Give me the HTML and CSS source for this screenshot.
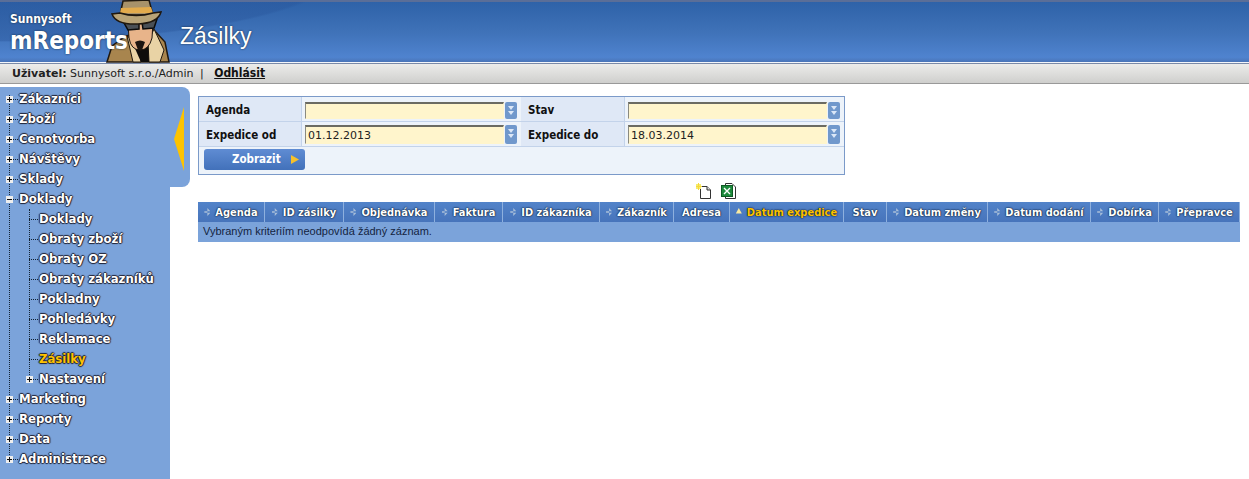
FILE: index.html
```html
<!DOCTYPE html>
<html>
	<head>
		<meta charset="UTF-8">
		<title>Zásilky</title>
		<link rel="stylesheet" href="styles.css">
	</head>
	<body>
		<div id="header">
			<div id="brand">
				<span class="company">Sunnysoft</span>
				<span class="product">mReports</span>
			</div>
			<svg class="spy" width="64" height="62" viewBox="0 0 64 62">
				<path d="M-1 62 L4 46 L18 36 L46 30 L57 42 L61 62 Z" fill="#a8854e" stroke="#20180f" stroke-width="1.5"/>
				<path d="M19 36 L25 62 L33 62 L30 44 Z" fill="#e9d3a5" stroke="#20180f"/>
				<path d="M46 29 L56 50 L52 62 L41 62 L40 42 Z" fill="#e9d3a5" stroke="#20180f"/>
				<path d="M25 44 L40 42 L41 62 L33 62 Z" fill="#0e0c0a"/>
				<path d="M20 24 L45 22 L44 38 Q41 50 32 50 Q23 50 21 38 Z" fill="#e8b48a" stroke="#20180f"/>
				<path d="M27 42 Q32 39 37 42 L34 50 L30 50 Z" fill="#1c1410"/>
				<path d="M15 21 L31 22 L31 29 L20 30 Z M34 22 L49 19 L46 28 L35 29 Z" fill="#4a5056" stroke="#0c0c0c" stroke-width="1.5"/>
				<path d="M15 1 L41 0 L45 15 L12 15 Z" fill="#a8926a" stroke="#20180f" stroke-width="1.5"/>
				<path d="M13 8 L43 7 L45 13 L12 13 Z" fill="#e3ab4c"/>
				<path d="M12 13 Q28 18 45 13 L53 12 Q50 23 30 24 Q8 25 4 14 Z" fill="#b9a477" stroke="#20180f" stroke-width="1.5"/>
			</svg>
			<h1>Zásilky</h1>
		</div>
		<div id="userbar">
			<b>Uživatel:</b> Sunnysoft s.r.o./Admin
			<span class="sep">|</span>
			<a href="#">Odhlásit</a>
		</div>
		<div id="main">
			<div id="side">
				<div id="flap"><span class="arrow"></span></div>
				<ul class="tree">
					<li class="node plus">Zákazníci</li>
					<li class="node plus">Zboží</li>
					<li class="node plus">Cenotvorba</li>
					<li class="node plus">Návštěvy</li>
					<li class="node plus">Sklady</li>
					<li class="node minus">Doklady</li>
					<li class="branch">
						<ul class="sub">
							<li class="leaf">Doklady</li>
							<li class="leaf">Obraty zboží</li>
							<li class="leaf">Obraty OZ</li>
							<li class="leaf">Obraty zákazníků</li>
							<li class="leaf">Pokladny</li>
							<li class="leaf">Pohledávky</li>
							<li class="leaf">Reklamace</li>
							<li class="leaf current">Zásilky</li>
							<li class="node plus">Nastavení</li>
						</ul>
					</li>
					<li class="node plus">Marketing</li>
					<li class="node plus">Reporty</li>
					<li class="node plus">Data</li>
					<li class="node plus last">Administrace</li>
				</ul>
			</div>
			<div id="content">
				<div id="filter">
					<div class="lbl">Agenda</div>
					<div class="fld"><span class="inp"></span><span class="spin"></span></div>
					<div class="lbl">Stav</div>
					<div class="fld"><span class="inp"></span><span class="spin"></span></div>
					<div class="lbl">Expedice od</div>
					<div class="fld tall"><span class="inp">01.12.2013</span><span class="spin"></span></div>
					<div class="lbl">Expedice do</div>
					<div class="fld tall"><span class="inp">18.03.2014</span><span class="spin"></span></div>
					<div class="actions"><a class="btn" href="#">Zobrazit<i></i></a></div>
				</div>
				<div id="export">
					<svg width="16" height="17" viewBox="0 0 16 17">
						<path d="M4.5 3.5 H11 L14.5 7 V15.5 H4.5 Z" fill="#fff" stroke="#333"/>
						<path d="M11 3.5 V7 H14.5" fill="#ddd" stroke="#333"/>
						<path d="M0 1 H5 V6 H0 Z" fill="#f4ec6c"/>
						<path d="M2.5 0 V7 M0 3.5 H6" stroke="#f7d83c"/>
					</svg>
					<svg width="16" height="17" viewBox="0 0 16 17">
						<path d="M4.5 0.5 H11 L14.5 4 V15.5 H4.5 Z" fill="#fff" stroke="#333"/>
						<rect x="0.5" y="2.5" width="11" height="11" fill="#1d8a3c" stroke="#0d5a22"/>
						<path d="M3 5 L9 11 M9 5 L3 11" stroke="#fff" stroke-width="1.4"/>
					</svg>
				</div>
				<div id="grid">
					<div class="th s">Agenda</div>
					<div class="th s">ID zásilky</div>
					<div class="th s">Objednávka</div>
					<div class="th s">Faktura</div>
					<div class="th s">ID zákazníka</div>
					<div class="th s">Zákazník</div>
					<div class="th">Adresa</div>
					<div class="th s up">Datum expedice</div>
					<div class="th">Stav</div>
					<div class="th s">Datum změny</div>
					<div class="th s">Datum dodání</div>
					<div class="th s">Dobírka</div>
					<div class="th s">Přepravce</div>
					<div class="empty">Vybraným kriteriím neodpovídá žádný záznam.</div>
				</div>
			</div>
		</div>
	</body>
</html>
```

FILE: styles.css
```css
*{margin:0;padding:0;box-sizing:border-box;}
li{list-style:none;}
html,body{height:100%;overflow:hidden;}
body{background:#fff;font-family:"DejaVu Sans","Liberation Sans",sans-serif;font-size:11px;color:#000;display:flex;flex-direction:column;}

#header{height:63px;flex:none;display:flex;align-items:stretch;color:#fff;border-top:2px solid #5a6e98;border-bottom:1px solid #f4f6fa;
	background:radial-gradient(ellipse 340px 70px at 0 -30px,rgba(40,85,155,.4) 0,rgba(40,85,155,.4) 98%,transparent 100%),linear-gradient(#2e62a8 0,#3f72b8 50%,#4f83cf 92%,#4a75b8 100%);}
#brand{width:108px;padding:11px 0 0 10px;position:relative;z-index:2;white-space:nowrap;}
.company{display:block;font:bold 12px/12px "DejaVu Sans Condensed","DejaVu Sans",sans-serif;font-stretch:condensed;text-shadow:0 0 2px #123;}
.product{display:block;font:bold 24px/27px "DejaVu Sans Condensed","DejaVu Sans",sans-serif;font-stretch:condensed;margin-top:3px;text-shadow:0 0 2px #123;}
.spy{margin-top:-2px;flex:none;overflow:visible;}
#header h1{font:normal 23px "Liberation Sans",sans-serif;margin:21px 0 0 8px;text-shadow:0 0 2px #123;}

#userbar{height:21px;flex:none;line-height:19px;padding-left:12px;color:#222;font-size:11px;
	background:linear-gradient(#ececea,#cfcfcd);border-top:1px solid #7a8aa8;border-bottom:1px solid #999;}
#userbar b{color:#222;}
.sep{margin:0 7px 0 3px;}
#userbar a{color:#111;font:bold 12px "DejaVu Sans Condensed","DejaVu Sans",sans-serif;font-stretch:condensed;text-decoration:underline;}

#main{flex:1;display:flex;margin-top:3px;min-height:0;}
#side{width:170px;flex:none;background:#7ba3da;position:relative;padding-top:2px;}
#flap{position:absolute;left:170px;top:0;width:20px;height:100px;background:#7ba3da;border-radius:0 8px 8px 0;}
.arrow{position:absolute;left:4px;top:20px;width:10px;height:64px;background:#fdc300;clip-path:polygon(100% 0,100% 100%,0 50%);}

.tree{position:relative;}
.tree:before{content:"";position:absolute;left:9px;top:6px;bottom:14px;border-left:1px dotted #123;}
.node,.leaf{height:20px;font:bold 13px/20px "DejaVu Sans Condensed","DejaVu Sans",sans-serif;font-stretch:condensed;color:#fff;white-space:nowrap;position:relative;padding-left:19px;
	text-shadow:1px 0 1px #223,-1px 0 1px #223,0 1px 1px #223,0 -1px 1px #223;}
.node:before,.leaf:before{content:"";position:absolute;left:9px;top:10px;width:9px;border-top:1px dotted #123;}
.node:after{content:"";position:absolute;left:6px;top:7px;width:7px;height:7px;
	background:linear-gradient(#111,#111) 1px 3px/5px 1px no-repeat,linear-gradient(#111,#111) 3px 1px/1px 5px no-repeat,#eee;}
.node.minus:after{background:linear-gradient(#111,#111) 1px 3px/5px 1px no-repeat,#eee;}
.sub{padding-left:20px;position:relative;}
.sub:before{content:"";position:absolute;left:29px;top:0;bottom:10px;border-left:1px dotted #123;}
.current{color:#fdc300;}

#content{flex:1;min-width:0;padding:9px 9px 0 28px;}
#filter{width:647px;display:grid;grid-template-columns:103px 219px 104px 219px;grid-template-rows:25px 25px 27px;border:1px solid #7b9ac9;background:#edf3fa;}
.lbl{background:#dfe8f6;font:bold 11.5px/26px "DejaVu Sans Condensed","DejaVu Sans",sans-serif;font-stretch:condensed;padding:0 7px;color:#111;border-bottom:1px solid #c3d3ea;border-right:1px solid #c3d3ea;}
.fld{display:flex;align-items:flex-end;gap:1px;padding:0 0 2px 3px;background:#edf3fa;border-bottom:1px solid #c3d3ea;}
.inp{width:199px;height:17px;background:#fff5cc;border:1px solid #fff5cc;border-top:2px solid #6b6b62;border-left:1px solid #8a8a80;line-height:17px;padding-left:2px;font-size:11px;color:#222;}
.spin{width:12px;height:17px;border-radius:2px;background:#7098cc;position:relative;}
.tall .inp,.tall .spin{height:19px;}
.spin:after{content:"";position:absolute;left:3px;top:4px;width:6px;height:9px;background:linear-gradient(#dbe7f7 0 40%,transparent 40% 60%,#dbe7f7 60%);clip-path:polygon(0 0,100% 0,50% 45%,100% 55%,50% 100%,0 55%,50% 45%);}
.actions{grid-column:1 / -1;padding:2px 0 0 5px;}
.btn{display:block;position:relative;width:101px;height:21px;border-radius:3px;background:linear-gradient(#5f8cd3,#4271ba);color:#fff;font:bold 11.5px/20px "DejaVu Sans Condensed","DejaVu Sans",sans-serif;font-stretch:condensed;text-decoration:none;padding-left:28px;}
.btn i{position:absolute;left:87px;top:6px;width:8px;height:9px;background:#f6c12a;clip-path:polygon(0 0,100% 50%,0 100%);}

#export{height:22px;margin-top:5px;display:flex;padding-left:498px;gap:9px;align-items:flex-start;padding-top:3px;}

#grid{width:1042px;display:grid;grid-template-columns:67px 79px 91px 68px 97px 74px 56px 114px 43px 101px 103px 68px 81px;}
.th{height:20px;background:linear-gradient(#5283c9,#4774bb);border-right:1px solid #8eb0de;color:#fff;font:bold 11px/21px "DejaVu Sans Condensed","DejaVu Sans",sans-serif;font-stretch:condensed;text-align:center;white-space:nowrap;text-shadow:0 0 2px #012,0 0 1px #012;}
.th.s:before{content:"";display:inline-block;width:6px;height:8px;margin-right:5px;background:#a9bfd9;clip-path:polygon(50% 0,100% 40%,0 40%,0 60%,100% 60%,50% 100%);}
.th.up{color:#fdc300;}
.th.up:before{background:#f8e8a0;clip-path:polygon(50% 0,100% 70%,0 70%);}
.empty{grid-column:1 / -1;height:20px;line-height:19px;background:#7ba3da;padding-left:5px;font-family:"Liberation Sans",sans-serif;font-size:11px;color:#14233f;}
```
